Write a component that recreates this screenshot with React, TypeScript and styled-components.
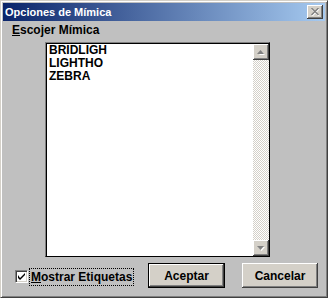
import React, { useState } from 'react'
import styled, { createGlobalStyle } from 'styled-components'

const GlobalStyle = createGlobalStyle`
  html, body {
    margin: 0;
    padding: 0;
    background: #c0c0c0;
  }
`

const Window = styled.div`
  box-sizing: border-box;
  width: 328px;
  height: 298px;
  display: flex;
  flex-direction: column;
  padding: 2px;
  background: #c0c0c0;
  border: 1px solid;
  border-color: #d4d0c8 #404040 #404040 #d4d0c8;
  box-shadow: inset 1px 1px #ffffff, inset -1px -1px #808080;
  font-family: 'Liberation Sans', Arial, sans-serif;
  font-weight: bold;
  font-size: 12px;
  color: #000;
`

const TitleBar = styled.div`
  height: 18px;
  display: flex;
  align-items: center;
  justify-content: space-between;
  padding: 0 2px 0 2px;
  background: linear-gradient(to right, #0a246a, #a6caf0);
  color: #fff;
  font-size: 11px;
`

const TitleText = styled.span`
  line-height: 18px;
`

const CloseButton = styled.div`
  width: 16px;
  height: 14px;
  display: flex;
  align-items: center;
  justify-content: center;
  background: #d4d0c8;
  box-shadow: inset -1px -1px #404040, inset 1px 1px #ffffff, inset -2px -2px #808080,
    inset 2px 2px #d4d0c8;
`

const Body = styled.div`
  flex: 1;
  display: flex;
  flex-direction: column;
  padding: 2px 7px 0 0;
`

const FieldLabel = styled.div`
  margin-left: 9px;
  line-height: 14px;
  height: 14px;
`

const Underlined = styled.span`
  text-decoration: underline;
  text-underline-offset: 1px;
`

const ListBox = styled.div`
  box-sizing: border-box;
  width: 225px;
  height: 215px;
  margin: 5px 0 0 42px;
  display: flex;
  background: #fff;
  border: 1px solid;
  border-color: #808080 #000 #000 #808080;
  box-shadow: inset 1px 1px #000;
  padding: 1px 0 0 1px;
`

const Items = styled.div`
  flex: 1;
  padding: 0 0 0 2px;
`

const Item = styled.div`
  line-height: 13px;
  height: 13px;
`

const ScrollBar = styled.div`
  width: 16px;
  display: flex;
  flex-direction: column;
  justify-content: space-between;
  background: repeating-conic-gradient(#d4d0c8 0 25%, #ffffff 0 50%) 0 0 / 2px 2px;
`

const ArrowButton = styled.div`
  width: 16px;
  height: 16px;
  display: flex;
  align-items: center;
  justify-content: center;
  background: #d4d0c8;
  box-shadow: inset -1px -1px #404040, inset 1px 1px #ffffff, inset -2px -2px #808080,
    inset 2px 2px #d4d0c8;
`

const Footer = styled.div`
  display: flex;
  align-items: center;
  margin-top: 6px;
  padding-left: 12px;
`

const CheckRow = styled.label`
  display: flex;
  align-items: center;
  margin-top: 2px;
  flex: 1;
`

const CheckBox = styled.div`
  box-sizing: border-box;
  width: 13px;
  height: 13px;
  margin-right: 1px;
  display: flex;
  align-items: center;
  justify-content: center;
  background: #fff;
  border: 1px solid;
  border-color: #808080 #ffffff #ffffff #808080;
  box-shadow: inset 1px 1px #404040, inset -1px -1px #d4d0c8;
`

const FocusText = styled.span`
  border: 1px dotted #000;
  padding: 1px 1px 1px 1px;
  line-height: 14px;
`

const Button = styled.button<{ $default?: boolean }>`
  box-sizing: border-box;
  width: ${({ $default }) => ($default ? 77 : 76)}px;
  height: 25px;
  margin-left: ${({ $default }) => ($default ? 0 : 17)}px;
  padding: 0;
  font: inherit;
  color: #000;
  background: #d4d0c8;
  border: ${({ $default }) => ($default ? '1px solid #000' : 'none')};
  box-shadow: inset -1px -1px #404040, inset 1px 1px #ffffff, inset -2px -2px #808080,
    inset 2px 2px #d4d0c8;
`

const items = ['BRIDLIGH', 'LIGHTHO', 'ZEBRA']

const Arrow = ({ up }: { up?: boolean }) => (
  <svg width="8" height="5" viewBox="0 0 8 5">
    {up ? (
      <>
        <path d="M4 1 L7 4 L1 4 Z" fill="#ffffff" transform="translate(1 1)" />
        <path d="M3.5 0 L7 4 L0 4 Z" fill="#808080" />
      </>
    ) : (
      <>
        <path d="M0 0 L7 0 L3.5 4 Z" fill="#ffffff" transform="translate(1 1)" />
        <path d="M0 0 L7 0 L3.5 4 Z" fill="#808080" />
      </>
    )}
  </svg>
)

const App: React.FC = () => {
  const [checked, setChecked] = useState(true)

  return (
    <>
      <GlobalStyle />
      <Window>
        <TitleBar>
          <TitleText>Opciones de Mímica</TitleText>
          <CloseButton>
            <svg width="9" height="8" viewBox="0 0 9 8">
              <path d="M1 1 L8 8 M8 1 L1 8" stroke="#ffffff" strokeWidth="1.4" />
              <path d="M0.5 0 L7.5 7 M7.5 0 L0.5 7" stroke="#808080" strokeWidth="1.4" />
            </svg>
          </CloseButton>
        </TitleBar>
        <Body>
          <FieldLabel>
            <Underlined>E</Underlined>scojer Mímica
          </FieldLabel>
          <ListBox>
            <Items>
              {items.map((name) => (
                <Item key={name}>{name}</Item>
              ))}
            </Items>
            <ScrollBar>
              <ArrowButton>
                <Arrow up />
              </ArrowButton>
              <ArrowButton>
                <Arrow />
              </ArrowButton>
            </ScrollBar>
          </ListBox>
          <Footer>
            <CheckRow onClick={() => setChecked(!checked)}>
              <CheckBox>
                {checked && (
                  <svg width="7" height="7" viewBox="0 0 7 7">
                    <path d="M0 2 L0 5 L2 7 L7 2 L7 0 L2 5 Z" fill="#000" />
                  </svg>
                )}
              </CheckBox>
              <FocusText>
                <Underlined>M</Underlined>ostrar Etiquetas
              </FocusText>
            </CheckRow>
            <Button $default>Aceptar</Button>
            <Button>Cancelar</Button>
          </Footer>
        </Body>
      </Window>
    </>
  )
}

export default App
